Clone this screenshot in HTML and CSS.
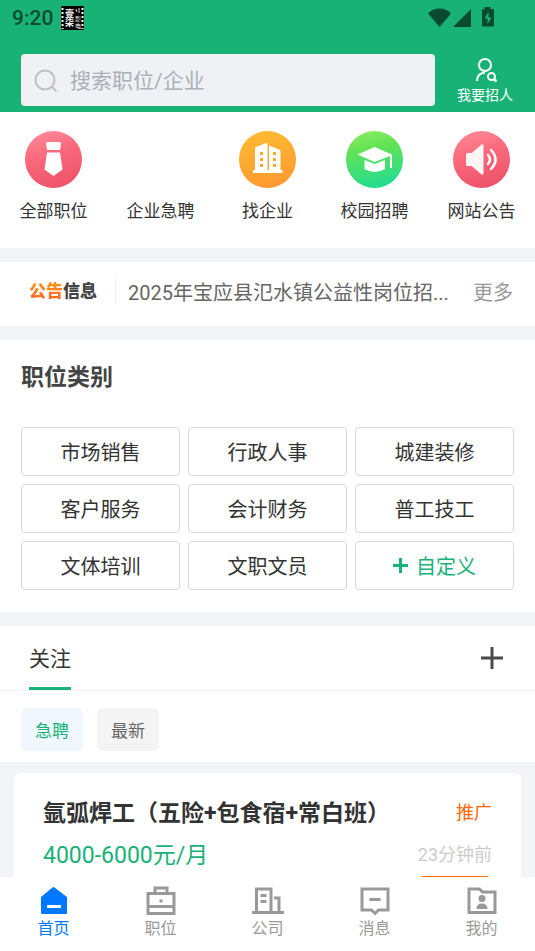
FILE: index.html
```html
<!DOCTYPE html>
<html lang="zh-CN">
<head>
<meta charset="utf-8">
<meta name="viewport" content="width=device-width, initial-scale=1">
<title>招聘首页</title>
<link rel="stylesheet" href="styles.css">
</head>
<body>
<header class="top">
  <div class="status">
    <span class="clock">9:20</span>
    <svg class="film" width="23" height="24" viewBox="0 0 23 24" aria-hidden="true">
      <rect width="23" height="24" rx="1" fill="#000"/>
      <path d="M1.500 2v21M21.500 2v21" stroke="#fff" stroke-width="2" stroke-dasharray="2 2"/>
      <text x="4" y="11" class="film-main">壹</text>
      <text x="4" y="20" class="film-main">柒</text>
      <path d="M15 3l1 3M18 2v5" stroke="#ddd" stroke-width="1"/>
      <text x="14" y="15" class="film-side">影</text>
      <text x="14" y="22" class="film-side">电</text>
    </svg>
    <svg class="signals" width="68" height="22" viewBox="0 0 68 22" aria-hidden="true">
      <path d="M1 6.500C7-.300 18-.300 24 6.500L12.500 20z" fill="#0a4a30"/>
      <path d="M44 2v18H26z" fill="#0a4a30"/>
      <path d="M57.500 0h6v2h2.500q1 0 1 1v15.500q0 1-1 1h-10q-1 0-1-1V3q0-1 1-1h1.500z" fill="#0a4a30"/>
      <path d="M61.500 5l-4 6.500h3V17l4-6.500h-3z" fill="#18b277"/>
    </svg>
  </div>
  <div class="search-row">
    <label class="search">
      <svg width="24" height="24" viewBox="0 0 24 24" fill="none" stroke="#bfc0c0" stroke-width="2" aria-hidden="true"><circle cx="11" cy="11" r="9.500"/><path d="M18 18l4.500 4.500"/></svg>
      <input type="search" placeholder="搜索职位/企业" aria-label="搜索职位/企业">
    </label>
    <a class="recruit" href="#">
      <svg width="24" height="25" viewBox="0 0 24 25" fill="none" stroke="#fff" stroke-width="2" aria-hidden="true"><circle cx="12" cy="7" r="6"/><path d="M4 23c0-5 3-8 8-8.500"/><circle cx="18.500" cy="18.500" r="3.500"/><path d="M21 21l2.500 2.500" stroke-width="2.500"/></svg>
      <span>我要招人</span>
    </a>
  </div>
</header>

<main class="content">
  <nav class="panel shortcuts" aria-label="快捷入口">
    <a href="#">
      <svg viewBox="0 0 57 57" aria-hidden="true">
        <defs><linearGradient id="red" x1=".2" y1="0" x2=".5" y2="1"><stop offset="0" stop-color="#ff8b98"/><stop offset=".4" stop-color="#fb6b7d"/><stop offset="1" stop-color="#ef5369"/></linearGradient></defs>
        <circle cx="28.500" cy="28.500" r="28.500" fill="url(#red)"/>
        <path d="M22.500 11h12q1.500 0 1.500 1.500l-1 6.500H22l-1-6.500q0-1.500 1.500-1.500zM22 21.500h13l2.500 17L28.500 45 19.500 38.500z" fill="#fff"/>
      </svg>
      <span>全部职位</span>
    </a>
    <a href="#"><svg viewBox="0 0 57 57" aria-hidden="true"></svg><span>企业急聘</span></a>
    <a href="#">
      <svg viewBox="0 0 57 57" aria-hidden="true">
        <defs><linearGradient id="orange" x1=".4" y1="0" x2=".6" y2="1"><stop offset="0" stop-color="#ffba31"/><stop offset="1" stop-color="#ff9831"/></linearGradient></defs>
        <circle cx="28.500" cy="28.500" r="28.500" fill="url(#orange)"/>
        <path fill-rule="evenodd" d="M14 42V39h2V17.500q0-1 1-1.500l10-4q1.500 0 1.500 1V39h1.500V14.500l10 4q1.500.500 1.500 1.500v19h2v3zM21 21v3h3v-3zm0 6v3h3v-3zm0 6v3h3v-3zM34 21v3h3v-3zm0 6v3h3v-3zm0 6v3h3v-3z" fill="#fff"/>
      </svg>
      <span>找企业</span>
    </a>
    <a href="#">
      <svg viewBox="0 0 57 57" aria-hidden="true">
        <defs><linearGradient id="green" x1=".3" y1="0" x2=".5" y2="1"><stop offset="0" stop-color="#88eb61"/><stop offset=".3" stop-color="#63e354"/><stop offset="1" stop-color="#22dc91"/></linearGradient></defs>
        <circle cx="28.500" cy="28.500" r="28.500" fill="url(#green)"/>
        <path d="M11.500 23.500L28.500 16l17.500 7.500V37h-2V25l-15.500 6zM18.500 29l10 4 10.500-4v9q-10.500 6-20.500 0z" fill="#fff"/>
      </svg>
      <span>校园招聘</span>
    </a>
    <a href="#">
      <svg viewBox="0 0 57 57" aria-hidden="true">
        <circle cx="28.500" cy="28.500" r="28.500" fill="url(#red)"/>
        <path d="M14.500 22h4L28 14q2.500-2 2.500 1v27q0 3-2.500 1L18.500 35h-4q-1.500 0-1.500-1.500v-10q0-1.500 1.500-1.500z" fill="#fff5f2"/>
        <path d="M35 24q4 4.500 0 9M38 19q9 9.500 0 19" fill="none" stroke="#fff" stroke-width="2.500" stroke-linecap="round"/>
      </svg>
      <span>网站公告</span>
    </a>
  </nav>

  <section class="panel notice">
    <strong class="notice-logo"><span>公告</span>信息</strong>
    <a class="notice-text" href="#">2025年宝应县氾水镇公益性岗位招...</a>
    <a class="notice-more" href="#">更多</a>
  </section>

  <section class="panel categories">
    <h2>职位类别</h2>
    <div class="category-grid">
      <button type="button">市场销售</button>
      <button type="button">行政人事</button>
      <button type="button">城建装修</button>
      <button type="button">客户服务</button>
      <button type="button">会计财务</button>
      <button type="button">普工技工</button>
      <button type="button">文体培训</button>
      <button type="button">文职文员</button>
      <button type="button" class="custom"><svg width="15" height="15" viewBox="0 0 15 15" aria-hidden="true"><path d="M7.500 0v15M0 7.500h15" stroke="#18b277" stroke-width="3"/></svg>自定义</button>
    </div>
  </section>

  <section class="panel feed">
    <div class="tabs">
      <button type="button" class="tab">关注</button>
      <button type="button" class="add" aria-label="添加"><svg width="22" height="22" viewBox="0 0 22 22"><path d="M11 0v22M0 11h22" stroke="#4b4b4b" stroke-width="3"/></svg></button>
    </div>
    <div class="chips">
      <button type="button" class="chip active">急聘</button>
      <button type="button" class="chip">最新</button>
    </div>
  </section>

  <article class="job">
    <div class="job-row">
      <h3>氩弧焊工（五险+包食宿+常白班）</h3>
      <span class="promo">推广</span>
    </div>
    <div class="job-row">
      <span class="salary">4000-6000元/月</span>
      <time>23分钟前</time>
    </div>
    <button type="button" class="apply" aria-label="申请"></button>
  </article>
</main>

<nav class="bottom" aria-label="主导航">
  <a class="current" href="#">
    <svg width="30" height="30" viewBox="0 0 30 30" aria-hidden="true"><path d="M2 11L13.500 1.500q1-1 2 0L28 11v16q0 1-1 1H3q-1 0-1-1z" fill="#0078ff"/><path d="M8 20.500h14" stroke="#fff" stroke-width="3"/></svg>
    <span>首页</span>
  </a>
  <a href="#">
    <svg width="30" height="30" viewBox="0 0 30 30" fill="none" stroke="#999" stroke-width="3" aria-hidden="true"><path d="M2 7.500h26v20H2zM9 7.500V2h12v5.500M2 20.500h26"/><path d="M13.500 15h3"/></svg>
    <span>职位</span>
  </a>
  <a href="#">
    <svg width="32" height="30" viewBox="0 0 32 30" fill="none" stroke="#999" stroke-width="3" aria-hidden="true"><path d="M0 26.500h32M4.500 26.500V3H19v23.500M22 12h5v14.500M8.500 9.500h6M8.500 15.500h6"/></svg>
    <span>公司</span>
  </a>
  <a href="#">
    <svg width="30" height="30" viewBox="0 0 30 30" fill="none" stroke="#999" stroke-width="3" aria-hidden="true"><path d="M2 3h26v21H18.500L15 27.500 11.500 24H2zM9.500 13.500h11"/></svg>
    <span>消息</span>
  </a>
  <a href="#">
    <svg width="30" height="30" viewBox="0 0 30 30" fill="none" stroke="#999" stroke-width="3" aria-hidden="true"><path d="M2 3h10.500l3 3H28v20.500H2z"/><circle cx="15" cy="12.500" r="3.500" fill="#999" stroke="none"/><path d="M9.500 23q0-5.500 5.500-5.500t5.500 5.500z" fill="#999" stroke="none"/></svg>
    <span>我的</span>
  </a>
</nav>
</body>
</html>
```
FILE: styles.css
```css
* {
  box-sizing: border-box;
}

body {
  margin: 0;
  height: 100vh;
  display: flex;
  flex-direction: column;
  overflow: hidden;
  background: #f3f4f8;
  color: #333;
  font-family: Roboto, "Noto Sans CJK SC", sans-serif;
}

a {
  color: inherit;
  text-decoration: none;
}

button,
input {
  font: inherit;
  color: inherit;
}

button {
  padding: 0;
  border: 0;
  background: none;
}

svg {
  display: block;
  flex: none;
}

h2,
h3 {
  margin: 0;
}

/* Header */
.top {
  flex: none;
  background: #18b277;
  padding-bottom: 6px;
}

.status {
  display: flex;
  align-items: center;
  height: 36px;
  padding: 0 40px 0 12px;
}

.clock {
  font-size: 21px;
  font-weight: 500;
  color: #0a4a30;
}

.film {
  margin-left: 8px;
}

.film-main {
  font-size: 9px;
  font-weight: 700;
  fill: #fff;
}

.film-side {
  font-size: 6px;
  fill: #fff;
}

.signals {
  margin-left: auto;
}

.search-row {
  display: flex;
  margin-top: 18px;
  padding-left: 21px;
}

.search {
  flex: 1;
  min-width: 0;
  height: 52px;
  display: flex;
  align-items: center;
  gap: 12px;
  padding: 1px 13px 0;
  border-radius: 4px;
  background: #f0f1f5;
}

.search input {
  flex: 1;
  min-width: 0;
  padding: 0;
  border: 0;
  outline: 0;
  background: none;
  font-size: 21px;
}

.search input::placeholder {
  color: #a9b0b8;
}

.recruit {
  width: 100px;
  display: flex;
  flex-direction: column;
  align-items: center;
  gap: 2px;
  padding-top: 4px;
  color: #fff;
  font-size: 14px;
  line-height: 20px;
}

/* Scrolling content */
.content {
  flex: 1;
  min-height: 0;
  overflow: hidden;
}

.panel {
  background: #fff;
  margin-bottom: 14px;
}

.shortcuts {
  display: grid;
  grid-template-columns: repeat(5, 1fr);
  padding: 19px 0 25px;
}

.shortcuts a {
  display: flex;
  flex-direction: column;
  align-items: center;
  gap: 11px;
  font-size: 17px;
  line-height: 24px;
}

.shortcuts svg {
  width: 57px;
  height: 57px;
}

.notice {
  display: flex;
  align-items: center;
  height: 64px;
  padding: 0 22px 6px 29px;
}

.notice-logo {
  padding-right: 18px;
  border-right: 1px solid #eee;
  font-size: 17px;
  font-weight: 900;
  line-height: 26px;
  color: #444;
}

.notice-logo span {
  background: linear-gradient(#ff9a0c, #ff622c);
  background-clip: text;
  color: transparent;
}

.notice-text {
  flex: 1;
  min-width: 0;
  margin: 0 20px 0 12px;
  overflow: hidden;
  text-overflow: ellipsis;
  white-space: nowrap;
  font-size: 20px;
  color: #666;
}

.notice-more {
  font-size: 20px;
  color: #999;
}

.categories {
  padding: 21px 21px 22px;
}

.categories h2 {
  font-size: 23px;
  line-height: 34px;
  color: #444;
}

.category-grid {
  display: grid;
  grid-template-columns: repeat(3, 1fr);
  gap: 8px;
  margin-top: 32px;
}

.category-grid button {
  display: flex;
  align-items: center;
  justify-content: center;
  gap: 8px;
  height: 49px;
  border: 1px solid #d8d8d8;
  border-radius: 4px;
  font-size: 20px;
}

.category-grid .custom {
  color: #18b277;
}

.feed {
  margin-bottom: 11px;
}

.tabs {
  display: flex;
  justify-content: space-between;
  height: 65px;
  padding: 0 32px 0 29px;
  border-bottom: 1px solid #f3f3f3;
}

.tab {
  border-bottom: 3px solid #18b277;
  font-size: 21px;
}

.chips {
  display: flex;
  gap: 14px;
  padding: 17px 21px 11px;
}

.chip {
  height: 43px;
  padding: 0 14px;
  border-radius: 6px;
  background: #f4f4f4;
  color: #666;
  font-size: 17px;
}

.chip.active {
  background: #f0f7ff;
  color: #18b277;
}

.job {
  margin: 0 14px;
  padding: 17px 29px;
  border-radius: 6px;
  background: #fff;
}

.job-row {
  display: flex;
  align-items: center;
  justify-content: space-between;
  height: 42px;
}

.job h3 {
  font-size: 23px;
}

.promo {
  font-size: 18px;
  color: #ff6600;
}

.salary {
  font-size: 23px;
  color: #18b277;
}

.job time {
  font-size: 18px;
  color: #ccc;
}

.apply {
  display: block;
  width: 74px;
  height: 36px;
  margin: 2px 0 0 auto;
  border: 2px solid #ff6600;
  border-radius: 6px;
}

/* Bottom navigation */
.bottom {
  flex: none;
  display: grid;
  grid-template-columns: repeat(5, 1fr);
  height: 74px;
  padding-top: 9px;
  background: #fff;
}

.bottom a {
  display: flex;
  flex-direction: column;
  align-items: center;
  gap: 1px;
  color: #999;
  font-size: 16px;
  line-height: 24px;
}

.bottom .current {
  color: #0078ff;
}
```
